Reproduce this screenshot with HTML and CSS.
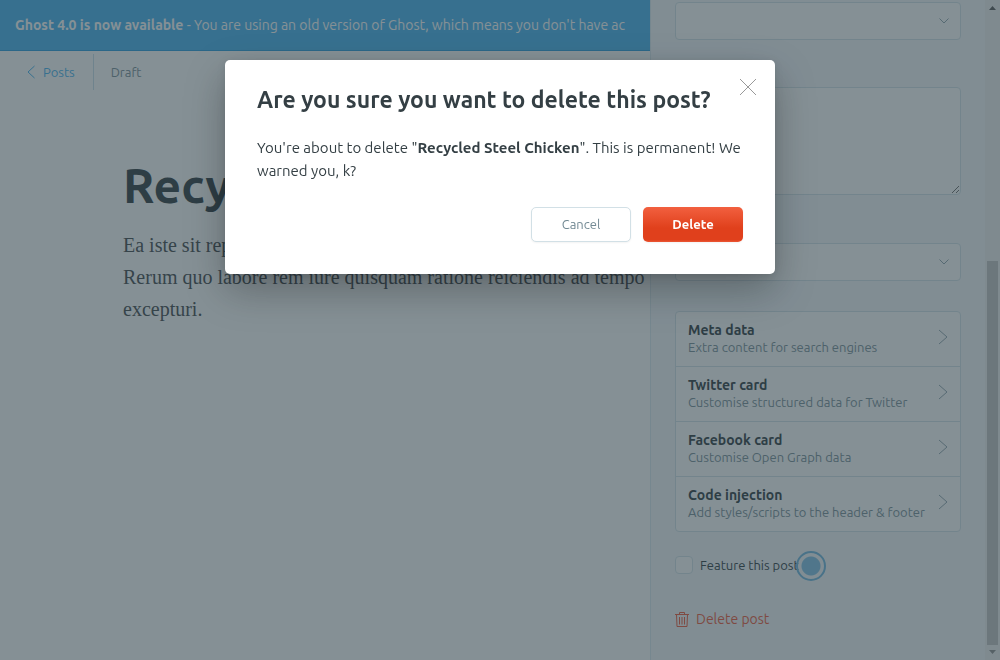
FILE: index.html
```html
<!DOCTYPE html>
<html lang="en">
<head>
<meta charset="utf-8">
<title>Ghost editor</title>
<link rel="stylesheet" href="styles.css">
</head>
<body>
<div class="app">
  <main class="editor">
    <aside class="banner"><strong>Ghost 4.0 is now available</strong> - You are using an old version of Ghost, which means you don't have ac</aside>
    <header class="toolbar">
      <a class="back" href="#"><svg width="8" height="14" viewBox="0 0 8 14"><path d="M7.500 1L1 7l6.500 6"/></svg>Posts</a>
      <span class="status">Draft</span>
    </header>
    <article class="post">
      <h1>Recycled Steel Chicken</h1>
      <p>Ea iste sit repellat.<br>Rerum quo labore rem iure quisquam ratione reiciendis ad tempo<br>excepturi.</p>
    </article>
  </main>

  <aside class="settings">
    <div class="fields">
      <div class="select">
        <select class="control" aria-label="Tags"><option></option></select>
        <svg class="caret" width="10" height="6" viewBox="0 0 10 6"><path d="M.5.5L5 5 9.500.5"/></svg>
      </div>
      <textarea class="control excerpt" aria-label="Excerpt"></textarea>
      <div class="select authors">
        <select class="control" aria-label="Authors"><option></option></select>
        <svg class="caret" width="10" height="6" viewBox="0 0 10 6"><path d="M.5.5L5 5 9.500.5"/></svg>
      </div>
      <nav class="panels">
        <button class="panel" type="button"><span><b>Meta data</b><small>Extra content for search engines</small></span><svg width="10" height="16" viewBox="0 0 10 16"><path d="M1 1l8 7-8 7"/></svg></button>
        <button class="panel" type="button"><span><b>Twitter card</b><small>Customise structured data for Twitter</small></span><svg width="10" height="16" viewBox="0 0 10 16"><path d="M1 1l8 7-8 7"/></svg></button>
        <button class="panel" type="button"><span><b>Facebook card</b><small>Customise Open Graph data</small></span><svg width="10" height="16" viewBox="0 0 10 16"><path d="M1 1l8 7-8 7"/></svg></button>
        <button class="panel" type="button"><span><b>Code injection</b><small>Add styles/scripts to the header &amp; footer</small></span><svg width="10" height="16" viewBox="0 0 10 16"><path d="M1 1l8 7-8 7"/></svg></button>
      </nav>
      <label class="feature"><input type="checkbox">Feature this post<i class="pointer"></i></label>
      <button class="remove" type="button"><svg width="14" height="15" viewBox="0 0 14 15"><path d="M0 2.500h14M4.500 2.500v-2h5v2M1.500 2.500l.5 12h10l.5-12M4.500 5v7.500M7 5v7.500M9.500 5v7.500"/></svg>Delete post</button>
    </div>
  </aside>
  <div class="scrollbar">
    <svg width="7" height="4" viewBox="0 0 7 4"><path fill="#505050" d="M0 4L3.500 0 7 4z"/></svg>
    <div class="thumb"></div>
    <svg width="7" height="4" viewBox="0 0 7 4"><path fill="#8b8b8b" d="M0 0l3.500 4L7 0z"/></svg>
  </div>
</div>

<div class="backdrop">
  <section class="modal" role="dialog" aria-labelledby="modal-title">
    <button class="close" type="button" aria-label="Close"><svg width="16" height="16" viewBox="0 0 16 16"><path d="M0 0l16 16M16 0L0 16"/></svg></button>
    <h2 id="modal-title">Are you sure you want to delete this post?</h2>
    <p>You're about to delete "<strong>Recycled Steel Chicken</strong>". This is permanent! We warned you, k?</p>
    <footer class="actions">
      <button class="btn" type="button">Cancel</button>
      <button class="btn btn-red" type="button">Delete</button>
    </footer>
  </section>
</div>
</body>
</html>
```
FILE: styles.css
```css
* { box-sizing: border-box; }
body {
  margin: 0;
  font: 14px/18px Ubuntu, "Noto Sans", sans-serif;
  color: #343f44;
  background: #fff;
}
button { margin: 0; padding: 0; border: 0; background: none; font: inherit; color: inherit; }
svg { flex: none; fill: none; stroke: currentColor; }

.app { display: flex; height: 100vh; overflow: hidden; }
.editor { flex: 1; min-width: 0; overflow: hidden; }
.banner {
  padding: 16px 15px;
  border-bottom: 1px solid #1f9ade;
  background: #3eb0ef;
  color: #fff;
  white-space: nowrap;
  overflow: hidden;
}
.toolbar { display: flex; padding: 3px 27px; font-size: 13px; line-height: 36px; }
.back {
  display: flex;
  align-items: center;
  gap: 8px;
  padding-right: 18px;
  border-right: 1px solid #c9dfeb;
  color: #3eb0ef;
  text-decoration: none;
}
.status { padding-left: 17px; color: #738a94; }
.post { padding: 60px 0 0 123px; white-space: nowrap; }
.post h1 { margin: 0; font-size: 48px; line-height: 64px; color: #263238; }
.post p {
  margin: 12px 0 0;
  font: 20px/32px "Liberation Serif", serif;
  color: #3a4145;
}

.settings { width: 335px; border-left: 1px solid #dae8ef; background: #f4f8fb; }
.fields { display: flex; flex-direction: column; padding: 2px 24px; }
.control {
  display: block;
  width: 100%;
  height: 38px;
  border: 1px solid #d2e1e8;
  border-radius: 4px;
  background: #fff;
  appearance: none;
}
.select { position: relative; }
.caret { position: absolute; right: 12px; top: 16px; color: #8ba0aa; }
.excerpt { height: 108px; margin: 47px 0 48px; }
.panels {
  display: flex;
  flex-direction: column;
  margin: 30px 0 24px;
  border: 1px solid #d2e1e8;
  border-radius: 4px;
  background: #fff;
}
.panel {
  display: flex;
  align-items: flex-start;
  justify-content: space-between;
  padding: 9px 12px;
  text-align: left;
  color: #738a94;
}
.panel svg { margin-top: 8px; color: #8ba0aa; }
.panel + .panel { border-top: 1px solid #d2e1e8; }
.panel b, .panel small { display: block; }
.panel b { color: #263238; }
.panel small { font-size: 13px; line-height: 17px; padding-bottom: 1px; }
.feature {
  position: relative;
  display: flex;
  align-items: center;
  align-self: flex-start;
  gap: 7px;
  font-size: 13px;
  color: #263238;
}
.feature input {
  width: 18px;
  height: 18px;
  margin: 0;
  border: 1px solid #d2e1e8;
  border-radius: 4px;
  background: #fff;
  appearance: none;
}
.pointer {
  position: absolute;
  left: 121px;
  top: -5px;
  width: 30px;
  height: 30px;
  border: 2px solid #69b4df;
  border-radius: 50%;
  background: radial-gradient(circle, #7cbfe5 9px, transparent 10px);
}
.remove {
  display: flex;
  align-items: center;
  align-self: flex-start;
  gap: 7px;
  margin-top: 36px;
  color: #f05230;
}
.scrollbar {
  display: flex;
  flex-direction: column;
  align-items: center;
  width: 15px;
  padding: 6px 0;
  background: #f1f1f1;
}
.scrollbar svg { stroke: none; }
.thumb { flex: none; width: 11px; height: 384px; margin: auto 0 5px; background: #c1c1c1; }

.backdrop {
  position: fixed;
  inset: 0;
  padding-top: 60px;
  background: rgba(52, 70, 78, .6);
}
.modal {
  position: relative;
  width: 550px;
  max-width: 100%;
  margin: 0 auto;
  padding: 24px 32px 32px;
  border-radius: 5px;
  background: #fff;
  box-shadow: 0 16px 40px rgba(0, 0, 0, .28), 0 2px 8px rgba(0, 0, 0, .1);
}
.modal h2 { margin: 0 0 20px; font-size: 23px; line-height: 32px; }
.modal p { margin: 0 0 25px; font-size: 15px; line-height: 23px; }
.close { position: absolute; top: 19px; right: 19px; width: 16px; height: 16px; color: #999; }
.close svg { display: block; }
.actions { display: flex; justify-content: flex-end; gap: 12px; }
.btn {
  width: 100px;
  height: 35px;
  padding-bottom: 2px;
  border: 1px solid #d2e0e6;
  border-radius: 5px;
  background: #fff;
  box-shadow: 0 1px 2px rgba(0, 0, 0, .05);
  font-size: 13px;
  color: #738a94;
}
.btn-red {
  border: 0;
  background: linear-gradient(#f2603f, #e0401c 60%, #e0401c 94%, #ec5836);
  color: #fff;
  font-weight: bold;
}
```
